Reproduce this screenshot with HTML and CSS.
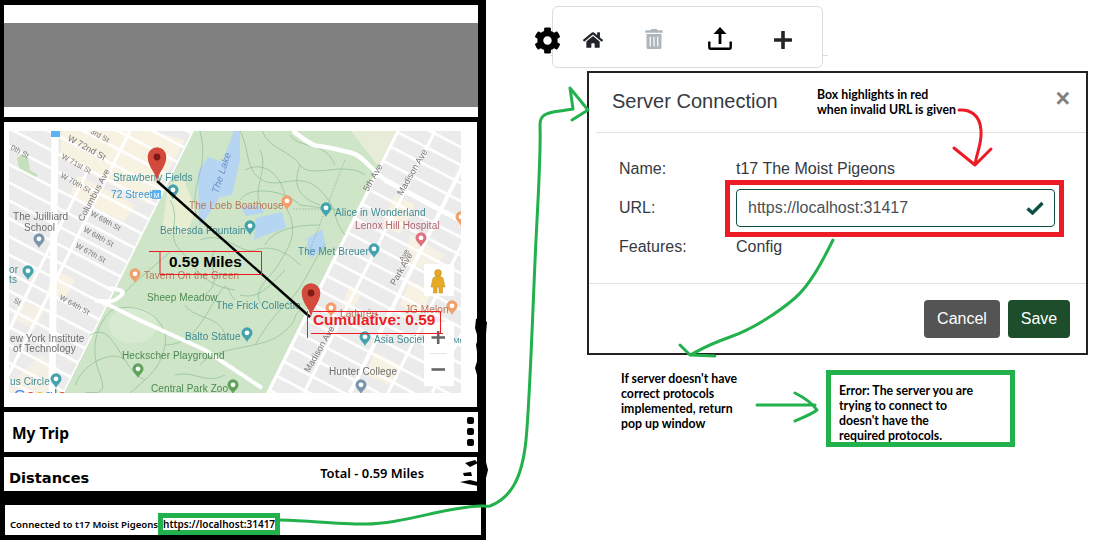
FILE: index.html
```html
<!DOCTYPE html>
<html lang="en">

<head>
    <meta charset="UTF-8">
    <meta name="viewport" content="width=device-width, initial-scale=1.0">
    <title>Server Connection</title>
    <link rel="stylesheet" href="styles.css">
</head>

<body>
    <div class="canvas">
        <!-- app mockup on the left -->
        <div class="sidebar">
            <div class="panel panel-banner">
                <div class="banner"></div>
            </div>

            <div class="panel panel-map">
                <svg class="map" viewBox="9 131 452 262" width="452" height="262">
                    <defs>
                        <pattern id="cross" width="120" height="16" patternUnits="userSpaceOnUse" patternTransform="translate(65 138) rotate(27.5)">
                            <rect width="120" height="2.6" fill="#fff" />
                        </pattern>
                        <g id="poi">
                            <path d="M0 7C-1.5 3.5-5.5 1.5-5.5-2.2A5.5 5.5 0 1 1 5.5-2.2C5.5 1.5 1.5 3.5 0 7z" />
                            <circle cy="-2.2" r="2.4" fill="#fff" />
                        </g>
                        <g id="pin">
                            <path d="M0 0C-2-10-9.3-14-9.3-24.5A9.3 9.3 0 1 1 9.3-24.5C9.3-14 2-10 0 0z" fill="#d34a3c" />
                            <circle cy="-24" r="3.4" fill="#7d1a14" />
                        </g>
                    </defs>

                    <g class="map-base">
                        <rect x="9" y="131" width="452" height="262" fill="#ebebeb" />
                        <!-- beige blocks -->
                        <g fill="#f8f2e2">
                            <polygon points="62,131 150,131 185,140 150,205 112,185 60,158" />
                            <polygon points="78,175 135,205 124,222 70,195" />
                            <polygon points="9,385 40,355 60,368 50,393 9,393" opacity=".7" />
                            <polygon points="20,300 45,310 35,330 12,318" opacity=".7" />
                            <polygon points="395,195 415,205 400,235 382,225" />
                            <polygon points="410,280 432,292 420,315 400,305" />
                            <polygon points="350,285 362,292 352,310 342,305" />
                            <polygon points="375,352 400,365 390,385 365,375" />
                            <polygon points="410,235 445,255 430,270 405,262" opacity=".8" />
                            <polygon points="55,270 75,280 65,298 47,290" />
                        </g>
                        <polygon points="17,158 27,150 30,170 38,175 34,180 20,172" fill="#c6e0bd" />
                        <rect x="9" y="131" width="452" height="262" fill="url(#cross)" />
                        <!-- avenues -->
                        <g stroke="#fff" fill="none" stroke-width="3">
                            <line x1="130" y1="131" x2="0" y2="392" />
                            <line x1="88" y1="170" x2="9" y2="330" />
                            <line x1="435" y1="131" x2="304" y2="393" />
                            <line x1="480" y1="131" x2="350" y2="393" stroke-width="4" />
                            <line x1="518" y1="131" x2="388" y2="393" />
                            <line x1="562" y1="131" x2="432" y2="393" />
                            <line x1="55" y1="131" x2="52" y2="393" stroke-width="7" />
                            <line x1="195" y1="131" x2="65" y2="393" stroke-width="5" />
                            <line x1="397" y1="131" x2="267" y2="393" stroke-width="5" />
                            <line x1="385" y1="180" x2="461" y2="221" stroke-width="5" />
                        </g>
                        <!-- park -->
                        <polygon points="194,131 396,131 266,393 64,393" fill="#cfe5c8" />
                        <polygon points="351,131 396,131 378,166" fill="#e6ecd8" />
                        <polygon points="168,185 183,178 196,210 186,235 162,232" fill="#e7eed2" />
                        <ellipse cx="133" cy="325" rx="24" ry="18" fill="#d8ebd2" />
                        <!-- water -->
                        <g fill="#b5d5f3">
                            <polygon points="198,172 208,157 222,162 234,131 240,131 240,160 232,195 220,197 206,218 199,226" />
                            <polygon points="240,206 262,206 264,213 246,216" />
                            <polygon points="256,218 282,212 286,228 266,235 254,240" />
                            <polygon points="308,238 322,229 326,246 312,258 306,252" />
                        </g>
                        <!-- paths -->
                        <g fill="none" stroke="#8ebb98" stroke-width=".7">
                            <path d="M240 131C250 150 245 170 262 180S300 170 320 190 330 215 345 235" />
                            <path d="M262 131C270 150 290 150 300 165S345 160 365 175" />
                            <path d="M240 200C250 185 285 190 300 205L340 210" />
                            <path d="M285 206C300 230 290 245 280 262S250 290 262 305" />
                            <path d="M170 200C182 220 165 235 180 250S200 285 235 290" />
                            <path d="M200 240C225 230 240 255 255 250S285 250 300 265" />
                            <path d="M325 245C310 265 305 285 290 300S270 320 255 345" />
                            <path d="M170 252C150 270 130 285 118 300" />
                            <path d="M112 310C95 325 90 350 100 375S90 390 85 393" />
                            <path d="M112 310C140 300 170 320 165 345S150 375 130 393" />
                            <path d="M165 345C190 345 200 325 215 300S225 290 235 300" />
                            <path d="M200 365C215 345 260 350 280 335S290 320 300 310" />
                            <path d="M260 150C270 170 250 190 262 206" />
                            <path d="M300 165C290 190 305 200 320 205" />
                            <path d="M345 160L310 250" stroke-dasharray="2 1" />
                            <path d="M90 335C115 320 120 370 145 380" />
                            <path d="M293 209H322" stroke-dasharray="2 1" />
                            <path d="M200 131C210 170 190 180 196 215" />
                            <path d="M245 170C265 160 280 175 285 195" />
                            <path d="M290 135C300 150 325 140 335 165" />
                            <path d="M215 250C205 265 225 280 205 295" />
                            <path d="M240 295C260 300 270 285 285 270" />
                            <path d="M185 305C195 320 220 315 225 335" />
                            <path d="M75 385C85 360 115 350 125 360" />
                            <path d="M175 375C195 370 205 385 225 375" />
                            <path d="M265 245C275 225 310 225 320 225" />
                        </g>
                        <!-- park drives -->
                        <path d="M293 131C305 140 312 146 318 146S340 150 352 153 372 172 387 181" fill="none" stroke="#fff" stroke-width="4.5" />
                        <path d="M95 301C105 300 110 304 118 298S125 290 108 288M103 302L135 318 205 350 262 388" fill="none" stroke="#fff" stroke-width="4" />

                        <!-- places -->
                        <g class="poi-teal">
                            <use href="#poi" x="173" y="192" />
                            <use href="#poi" x="250" y="228" />
                            <use href="#poi" x="326" y="210" />
                            <use href="#poi" x="374" y="251" />
                            <use href="#poi" x="28" y="273" />
                            <use href="#poi" x="247" y="335" />
                            <use href="#poi" x="56" y="381" />
                            <use href="#poi" x="365" y="339" />
                        </g>
                        <g class="poi-orange">
                            <use href="#poi" x="287" y="203" />
                            <use href="#poi" x="135" y="276" />
                            <use href="#poi" x="331" y="310" />
                            <use href="#poi" x="452" y="308" />
                            <use href="#poi" x="461" y="219" />
                        </g>
                        <g class="poi-green">
                            <use href="#poi" x="138" y="371" />
                            <use href="#poi" x="233" y="387" />
                        </g>
                        <g class="poi-gray">
                            <use href="#poi" x="39" y="241" />
                            <use href="#poi" x="361" y="387" />
                        </g>
                        <use class="poi-pink" href="#poi" x="421" y="240" />
                        <rect x="152" y="190" width="9" height="9" rx="1" fill="#5ab2ef" />
                        <text class="metro" x="153.500" y="197.500">M</text>
                        <rect x="51" y="131" width="9" height="6" fill="#5ab2ef" />

                        <!-- labels -->
                        <g class="lbl lbl-gray">
                            <text x="13" y="220">The Juilliard</text>
                            <text x="24" y="231">School</text>
                            <text x="10" y="342">ew York Institute</text>
                            <text x="13" y="352">of Technology</text>
                            <text x="329" y="375">Hunter College</text>
                        </g>
                        <g class="lbl lbl-teal">
                            <text x="113" y="181">Strawberry Fields</text>
                            <text x="160" y="234">Bethesda Fountain</text>
                            <text x="335" y="216">Alice in Wonderland</text>
                            <text x="298" y="255">The Met Breuer</text>
                            <text x="216" y="309">The Frick Collectio</text>
                            <text x="185" y="340">Balto Statue</text>
                            <text x="374" y="343">Asia Societ</text>
                            <text class="lbl-edge" x="453" y="343">Mu</text>
                            <text x="10" y="385">us Circle</text>
                            <text x="9" y="273">or</text>
                            <text x="9" y="283">ts</text>
                        </g>
                        <text class="lbl lbl-blue" x="111" y="198">72 Street</text>
                        <g class="lbl lbl-orange">
                            <text x="189" y="209">The Loeb Boathouse</text>
                            <text x="144" y="279">Tavern On the Green</text>
                            <text x="340" y="317">Ladurée</text>
                            <text x="405" y="313">JG Melon</text>
                        </g>
                        <text class="lbl lbl-pink" x="355" y="229">Lenox Hill Hospital</text>
                        <g class="lbl lbl-green">
                            <text x="147" y="301">Sheep Meadow</text>
                            <text x="122" y="359">Heckscher Playground</text>
                            <text x="151" y="392">Central Park Zoo</text>
                        </g>
                        <text class="lbl lbl-lake" transform="translate(218 194) rotate(-72)">The Lake</text>
                        <g class="street">
                            <text class="street-big" transform="translate(67 140) rotate(29)">W 72nd St</text>
                            <text transform="translate(61 158) rotate(29)">W 71st St</text>
                            <text transform="translate(60 177) rotate(29)">W 70th St</text>
                            <text transform="translate(90 215) rotate(29)">W 69th St</text>
                            <text transform="translate(83 231) rotate(29)">W 68th St</text>
                            <text transform="translate(75 247) rotate(29)">W 67th St</text>
                            <text transform="translate(59 299) rotate(29)">W 64th St</text>
                            <text transform="translate(10 149) rotate(29)">0th St</text>
                            <text transform="translate(90 133) rotate(29)">3rd St</text>
                            <text transform="translate(13 302) rotate(29)">St</text>
                            <text class="street-big" transform="translate(83 222) rotate(-62)">Columbus Ave</text>
                            <text class="street-big" transform="translate(368 192) rotate(-60)">5th Ave</text>
                            <text class="street-big" transform="translate(402 196) rotate(-60)">Madison Ave</text>
                            <text class="street-big" transform="translate(309 373) rotate(-60)">Madison Ave</text>
                            <text class="street-big" transform="translate(395 286) rotate(-60)">Park Ave</text>
                            <text transform="translate(403 262) rotate(-60)">Ave</text>
                        </g>
                        <text class="google" x="14" y="400"><tspan fill="#4285f4">G</tspan><tspan fill="#ea4335">o</tspan><tspan fill="#fbbc05">o</tspan><tspan fill="#4285f4">g</tspan><tspan fill="#34a853">l</tspan><tspan fill="#ea4335">e</tspan></text>
                    </g>

                    <!-- map controls -->
                    <rect x="424" y="264" width="30" height="32" fill="#fff" />
                    <g fill="#e8a923" stroke="#b9861c" stroke-width=".5">
                        <circle cx="438" cy="273" r="3.4" />
                        <path d="M433 278Q438 274 443 278L445 287 442.500 287V293H439V287H437V293H433.500V287L431 287z" />
                    </g>
                    <rect x="424" y="322" width="30" height="64" fill="#fff" />
                    <rect x="430" y="353" width="17" height="1" fill="#e4e4e4" />
                    <path d="M431.500 337.500H445M438.200 331V344" stroke="#666" stroke-width="2.6" fill="none" />
                    <path d="M431.500 369.500H445" stroke="#666" stroke-width="2.6" fill="none" />

                    <!-- trip overlay -->
                    <line x1="157" y1="181" x2="310" y2="317" stroke="#000" stroke-width="2.4" />
                    <use href="#pin" x="157" y="181" />
                    <use href="#pin" x="311" y="317" />
                    <g stroke="#ed1c24" stroke-width="1" fill="none">
                        <path d="M149 251.500H261.500V274.500H160M160 274.500V251.500" />
                        <path d="M313 311.500H440.500V333M311 333.500H443M307.500 311V338" />
                    </g>
                    <text class="trip-label" x="169" y="267">0.59 Miles</text>
                    <text class="trip-label trip-red" x="313" y="325">Cumulative: 0.59</text>
                </svg>
            </div>

            <div class="panel panel-trip">
                <span class="trip-title">My Trip</span>
                <div class="dots">
                    <i></i>
                    <i></i>
                    <i></i>
                </div>
            </div>

            <div class="panel panel-dist">
                <span class="dist-title">Distances</span>
                <span class="dist-total">Total - 0.59 Miles</span>
            </div>

            <div class="panel panel-status">
                <span>Connected to t17 Moist Pigeons</span>
                <span class="status-url">https://localhost:31417</span>
            </div>
        </div>

        <!-- toolbar -->
        <div class="toolbar">
            <svg class="tool-home" viewBox="0 0 576 512">
                <path d="M280.37 148.26L96 300.11V464a16 16 0 0 0 16 16l112.06-.29a16 16 0 0 0 15.92-16V368a16 16 0 0 1 16-16h64a16 16 0 0 1 16 16v95.64a16 16 0 0 0 16 16.05L464 480a16 16 0 0 0 16-16V300L295.67 148.26a12.19 12.19 0 0 0-15.3 0zM571.6 251.47L488 182.56V44.05a12 12 0 0 0-12-12h-56a12 12 0 0 0-12 12v72.61L318.47 43a48 48 0 0 0-61 0L4.34 251.47a12 12 0 0 0-1.6 16.9l25.5 31A12 12 0 0 0 45.15 301l235.22-193.74a12.19 12.19 0 0 1 15.3 0L530.9 301a12 12 0 0 0 16.9-1.6l25.5-31a12 12 0 0 0-1.7-16.93z" />
            </svg>
            <svg class="tool-trash" viewBox="0 0 448 512">
                <path d="M32 464a48 48 0 0 0 48 48h288a48 48 0 0 0 48-48V128H32zm272-256a16 16 0 0 1 32 0v224a16 16 0 0 1-32 0zm-96 0a16 16 0 0 1 32 0v224a16 16 0 0 1-32 0zm-96 0a16 16 0 0 1 32 0v224a16 16 0 0 1-32 0zM432 32H312l-9-19a24 24 0 0 0-21.500-13h-114.300a23.720 23.720 0 0 0-21.400 13l-9 19H16A16 16 0 0 0 0 48v32a16 16 0 0 0 16 16h416a16 16 0 0 0 16-16V48a16 16 0 0 0-16-16z" />
            </svg>
            <svg class="tool-upload" viewBox="0 0 24 23">
                <path d="M1.300 14.500V20.200Q1.300 21.700 2.800 21.700H21.200Q22.700 21.700 22.700 20.200V14.500" fill="none" stroke="#000" stroke-width="2.400" />
                <path d="M12 0L18.500 7H13.400V17H10.600V7H5.500z" />
            </svg>
            <svg class="tool-plus" viewBox="0 0 18 18">
                <path d="M9 1V17M1 9H17" fill="none" stroke="#212529" stroke-width="3.600" stroke-linecap="round" />
            </svg>
        </div>
        <svg class="gear" viewBox="0 0 512 512">
            <path d="M487.4 315.7l-42.6-24.6c4.3-23.2 4.3-47 0-70.2l42.6-24.6c4.9-2.8 7.1-8.6 5.5-14-11.1-35.6-30-67.8-54.7-94.6-3.8-4.1-10-5.1-14.8-2.3L380.8 110c-17.9-15.4-38.5-27.3-60.8-35.1V25.8c0-5.600-3.900-10.500-9.400-11.700-36.700-8.200-74.300-7.800-109.200 0-5.500 1.200-9.400 6.100-9.400 11.700V75c-22.200 7.900-42.800 19.800-60.800 35.100L88.700 85.500c-4.900-2.800-11-1.900-14.800 2.300-24.700 26.700-43.600 58.900-54.700 94.600-1.700 5.400.6 11.200 5.500 14L67.300 221c-4.300 23.200-4.300 47 0 70.200l-42.600 24.600c-4.900 2.800-7.100 8.600-5.500 14 11.100 35.600 30 67.800 54.700 94.600 3.800 4.100 10 5.100 14.800 2.300l42.600-24.600c17.900 15.400 38.500 27.300 60.800 35.100v49.200c0 5.600 3.900 10.500 9.400 11.700 36.700 8.200 74.300 7.800 109.200 0 5.500-1.200 9.400-6.100 9.400-11.700v-49.200c22.200-7.900 42.800-19.800 60.800-35.100l42.600 24.600c4.900 2.800 11 1.900 14.800-2.300 24.700-26.700 43.600-58.900 54.700-94.600 1.500-5.500-.7-11.300-5.600-14.100zM256 336c-44.100 0-80-35.900-80-80s35.900-80 80-80 80 35.900 80 80-35.900 80-80 80z" />
        </svg>
        <div class="tick tick-left"></div>
        <div class="tick tick-right"></div>

        <!-- server dialog -->
        <div class="modal">
            <div class="modal-header">
                <h5>Server Connection</h5>
                <span class="close">×</span>
            </div>
            <div class="modal-body">
                <div class="field-name">Name:</div>
                <div>t17 The Moist Pigeons</div>
                <div class="field-name">URL:</div>
                <div class="url-input">
                    <span>https://localhost:31417</span>
                    <svg viewBox="0 0 18 14" width="18" height="14">
                        <path d="M1.500 7.500L6.500 12 16.500 2" fill="none" stroke="#0e5045" stroke-width="3.400" />
                    </svg>
                </div>
                <div class="field-name">Features:</div>
                <div>Config</div>
            </div>
            <div class="modal-footer">
                <button class="btn-cancel">Cancel</button>
                <button class="btn-save">Save</button>
            </div>
        </div>
        <div class="url-highlight"></div>

        <!-- notes -->
        <div class="note note-box">Box highlights in red<br>when invalid URL is given</div>
        <div class="note note-server">If server doesn't have<br>correct protocols<br>implemented, return<br>pop up window</div>
        <div class="note note-error">Error: The server you are<br>trying to connect to<br>doesn't have the<br>required protocols.</div>

        <!-- hand drawn marks -->
        <svg class="marks" viewBox="0 0 1098 553" width="1098" height="553">
            <g fill="none" stroke="#22b14c" stroke-width="3" stroke-linecap="round" stroke-linejoin="round">
                <path d="M280 520C300 520 335 524 365 524S425 514 455 509 480 507 490 506C510 498 522 480 526 440S533 300 536 240 541 150 540 125C540 115 545 113 560 111L573 109 570 88 588 110 572 120" />
                <path d="M833 240C822 262 810 285 795 298S755 328 730 337 700 350 692 354M680 345L690 355 715 356" />
                <path d="M757 405H815M795 393C803 397 812 403 817 410 812 414 802 418 795 421" />
            </g>
            <g fill="none" stroke="#ed1c24" stroke-width="3" stroke-linecap="round" stroke-linejoin="round">
                <path d="M959 110C970 109 980 115 981 130S977 150 975 165M954 148L975 165 991 149" />
            </g>
            <g fill="#000">
                <path d="M476 319L481 317 487 322 486 334 483 342 485 352 482 362 486 370 482 376 477 375 475 368 478 358 476 345 478 338 475 328z" />
                <path d="M465 463L475 460 478 463 470 467zM463 473L471 472 472 476 464 476zM460 482L470 480 478 482 478 486 468 484zM479 464L486 462 488 470 486 478 480 476z" />
            </g>
        </svg>
    </div>
</body>

</html>
```
FILE: styles.css
```css
html,
body {
    margin: 0;
    padding: 0;
    background: #fff;
}

.canvas {
    position: relative;
    width: 1098px;
    height: 553px;
    overflow: hidden;
    font-family: "Liberation Sans", Arial, sans-serif;
}

/* left column */
.sidebar {
    width: 486px;
    height: 540px;
    box-sizing: border-box;
    padding-top: 5px;
    background: #000;
    display: flex;
    flex-direction: column;
}

.panel {
    background: #fff;
    margin-left: 4px;
    box-sizing: border-box;
}

.panel-banner {
    width: 474px;
    height: 112px;
    padding: 18px 0 10px;
    margin-bottom: 5px;
}

.banner {
    height: 100%;
    background: #808080;
}

.panel-map {
    width: 473px;
    height: 285px;
    padding: 9px 0 0 5px;
    margin-bottom: 5px;
}

.map {
    display: block;
}

.map-base {
    filter: blur(0.35px);
}

.poi-teal {
    fill: #45a3ad;
}

.poi-orange {
    fill: #f2a06b;
}

.poi-green {
    fill: #5fa25a;
}

.poi-gray {
    fill: #7b95ac;
}

.poi-pink {
    fill: #e0727f;
}

.metro {
    font-size: 7px;
    fill: #fff;
    font-family: "Liberation Sans", Arial, sans-serif;
}

.lbl {
    font-size: 10px;
    font-family: "Liberation Sans", Arial, sans-serif;
    letter-spacing: 0.1px;
}

.lbl-gray {
    fill: #6d6d6d;
}

.lbl-teal {
    fill: #3f8a92;
}

.lbl-edge {
    font-size: 8px;
}

.lbl-blue {
    fill: #3c94d2;
}

.lbl-orange {
    fill: #b9775a;
}

.lbl-pink {
    fill: #b2646f;
}

.lbl-green {
    fill: #4a8a4e;
}

.lbl-lake {
    fill: #6a8fc4;
    font-style: italic;
}

.street text {
    font-size: 7.500px;
    fill: #777;
    font-family: "Liberation Sans", Arial, sans-serif;
}

.street .street-big {
    font-size: 9px;
}

.google {
    font-size: 15px;
    font-family: "Liberation Sans", Arial, sans-serif;
    letter-spacing: 0.8px;
}

.trip-label {
    font-size: 15.400px;
    font-weight: bold;
    font-family: "Liberation Sans", Arial, sans-serif;
}

.trip-red {
    fill: #ed1c24;
}

.panel-trip {
    width: 474px;
    height: 40px;
    margin-bottom: 5px;
    padding: 5px 4px 6px 8px;
    display: flex;
    justify-content: space-between;
    align-items: center;
}

.trip-title {
    font-family: "Noto Sans", sans-serif;
    font-weight: 700;
    font-size: 15.500px;
    margin-top: 3px;
}

.dots {
    height: 100%;
    display: flex;
    flex-direction: column;
    justify-content: space-between;
}

.dots i {
    display: block;
    width: 7px;
    height: 7px;
    border-radius: 2px;
    background: #000;
}

.panel-dist {
    width: 473px;
    height: 34px;
    padding: 0 53px 0 5px;
    display: flex;
    justify-content: space-between;
}

.dist-title {
    font-family: "DejaVu Sans", sans-serif;
    font-weight: 700;
    font-size: 14.600px;
    margin-top: 12px;
}

.dist-total {
    font-family: "Noto Sans", sans-serif;
    font-weight: 600;
    font-size: 12.900px;
    margin-top: 7px;
}

.panel-status {
    width: 476px;
    height: 30px;
    margin: 14px 0 0 5px;
    padding: 8px 0 0 5px;
    display: flex;
    align-items: center;
    font-family: "Noto Sans", sans-serif;
    font-weight: 600;
    font-size: 9.600px;
    white-space: nowrap;
}

.status-url {
    width: 122px;
    height: 22px;
    box-sizing: border-box;
    margin-left: auto;
    margin-right: 201px;
    border: 5px solid #22b14c;
    font-size: 10px;
    line-height: 12px;
    text-align: center;
    background: #fff;
}

/* toolbar */
.gear {
    position: absolute;
    left: 534px;
    top: 27px;
    width: 27px;
    height: 27px;
}

.toolbar {
    position: absolute;
    left: 552px;
    top: 6px;
    width: 271px;
    height: 62px;
    box-sizing: border-box;
    padding-left: 30px;
    background: #fff;
    border: 1px solid #dcdcdc;
    border-radius: 6px;
    display: flex;
    align-items: center;
}

.tool-home {
    width: 20px;
    height: 18px;
    fill: #212529;
    margin: 6px 42px 0 0;
}

.tool-trash {
    width: 18px;
    height: 20px;
    fill: #adb5bd;
    margin: 3px 45px 0 0;
}

.tool-upload {
    width: 24px;
    height: 23px;
    margin: 3px 42px 0 0;
}

.tool-plus {
    width: 18px;
    height: 18px;
    margin-top: 6px;
}

.tick {
    position: absolute;
    top: 55px;
    height: 1px;
    background: #dcdcdc;
}

.tick-left {
    left: 550px;
    width: 2px;
}

.tick-right {
    left: 823px;
    width: 5px;
}

/* dialog */
.modal {
    position: absolute;
    left: 587px;
    top: 71px;
    width: 501px;
    height: 284px;
    box-sizing: border-box;
    border: 2px solid #222;
    background: #fff;
    color: #343a40;
    display: flex;
    flex-direction: column;
}

.modal-header {
    height: 60px;
    box-sizing: border-box;
    margin-left: 7px;
    padding: 0 16px 3px 16px;
    border-bottom: 1px solid #dee2e6;
    display: flex;
    justify-content: space-between;
    align-items: center;
}

.modal-header h5 {
    margin: 0;
    font-size: 20px;
    font-weight: normal;
}

.close {
    font-size: 25px;
    font-weight: bold;
    color: #808080;
    margin-bottom: 6px;
}

.modal-body {
    height: 151px;
    box-sizing: border-box;
    padding: 16px 0 0 30px;
    display: grid;
    grid-template-columns: 117px 319px;
    grid-template-rows: 39px 39px 39px;
    align-items: center;
    font-size: 16px;
    border-bottom: 1px solid #dee2e6;
}

.url-input {
    height: 38px;
    box-sizing: border-box;
    padding: 0 10px 0 11px;
    border: 1px solid #0e5045;
    border-radius: 4px;
    color: #495057;
    display: flex;
    justify-content: space-between;
    align-items: center;
}

.modal-footer {
    flex: 1;
    padding: 16px 16px 0 0;
    display: flex;
    justify-content: flex-end;
    align-items: flex-start;
    gap: 8px;
}

button {
    height: 38px;
    border: none;
    border-radius: 4px;
    color: #fff;
    font-family: inherit;
    font-size: 16px;
    cursor: pointer;
}

.btn-cancel {
    width: 76px;
    background: #545454;
}

.btn-save {
    width: 62px;
    background: #1e4d2b;
}

.url-highlight {
    position: absolute;
    left: 725px;
    top: 180px;
    width: 339px;
    height: 57px;
    box-sizing: border-box;
    border: 5px solid #ed1c24;
}

/* annotations */
.note {
    position: absolute;
    font-family: Lato, sans-serif;
    font-weight: 700;
    font-size: 12.300px;
    line-height: 15px;
    color: #000;
    white-space: nowrap;
}

.note-box {
    left: 817px;
    top: 87px;
}

.note-server {
    left: 621px;
    top: 371px;
}

.note-error {
    left: 826px;
    top: 370px;
    width: 189px;
    height: 77px;
    box-sizing: border-box;
    padding: 8px 0 0 8px;
    border: 5px solid #22b14c;
}

.marks {
    position: absolute;
    left: 0;
    top: 0;
    pointer-events: none;
}
```
